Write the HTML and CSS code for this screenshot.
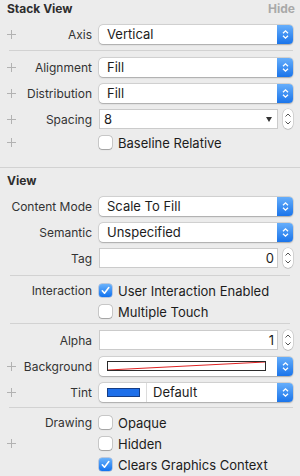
FILE: index.html
```html
<!DOCTYPE html>
<html lang="en">
<head>
<meta charset="UTF-8"/>
<title>Attributes Inspector</title>
<link rel="stylesheet" href="styles.css">
</head>
<body>
<div class="panel">
  <div class="head"><span>Stack View</span><span class="hide">Hide</span></div>

  <div class="row">
    <span class="plus"></span><span class="lbl">Axis</span>
    <div class="popup"><span class="val">Vertical</span><span class="arr"><svg width="7" height="11" viewBox="0 0 7 11"><path d="M1 4.3L3.5 1.8L6 4.3M1 6.7L3.5 9.2L6 6.7" fill="none" stroke="#fff" stroke-width="1.3"/></svg></span></div>
  </div>
  <div class="sep s1"></div>
  <div class="row">
    <span class="plus"></span><span class="lbl">Alignment</span>
    <div class="popup"><span class="val">Fill</span><span class="arr"><svg width="7" height="11" viewBox="0 0 7 11"><path d="M1 4.3L3.5 1.8L6 4.3M1 6.7L3.5 9.2L6 6.7" fill="none" stroke="#fff" stroke-width="1.3"/></svg></span></div>
  </div>
  <div class="row">
    <span class="plus"></span><span class="lbl">Distribution</span>
    <div class="popup"><span class="val">Fill</span><span class="arr"><svg width="7" height="11" viewBox="0 0 7 11"><path d="M1 4.3L3.5 1.8L6 4.3M1 6.7L3.5 9.2L6 6.7" fill="none" stroke="#fff" stroke-width="1.3"/></svg></span></div>
  </div>
  <div class="row">
    <span class="plus"></span><span class="lbl">Spacing</span>
    <div class="fieldwrap">
      <div class="field combo"><span>8</span><span class="tri"></span></div>
      <span class="stepper"><svg width="10" height="20" viewBox="0 0 10 20"><path d="M2.5 7.5L5 5L7.5 7.5M2.5 12.5L5 15L7.5 12.5" fill="none" stroke="#555" stroke-width="1"/></svg></span>
    </div>
  </div>
  <div class="row check">
    <span class="plus"></span>
    <div class="ctl"><span class="cb"></span>Baseline Relative</div>
  </div>

  <div class="sep full"></div>
  <div class="head view"><span>View</span></div>

  <div class="row">
    <span class="lbl">Content Mode</span>
    <div class="popup"><span class="val">Scale To Fill</span><span class="arr"><svg width="7" height="11" viewBox="0 0 7 11"><path d="M1 4.3L3.5 1.8L6 4.3M1 6.7L3.5 9.2L6 6.7" fill="none" stroke="#fff" stroke-width="1.3"/></svg></span></div>
  </div>
  <div class="row">
    <span class="lbl">Semantic</span>
    <div class="popup"><span class="val">Unspecified</span><span class="arr"><svg width="7" height="11" viewBox="0 0 7 11"><path d="M1 4.3L3.5 1.8L6 4.3M1 6.7L3.5 9.2L6 6.7" fill="none" stroke="#fff" stroke-width="1.3"/></svg></span></div>
  </div>
  <div class="row">
    <span class="lbl">Tag</span>
    <div class="fieldwrap">
      <div class="field num">0</div>
      <span class="stepper"><svg width="10" height="20" viewBox="0 0 10 20"><path d="M2.5 7.5L5 5L7.5 7.5M2.5 12.5L5 15L7.5 12.5" fill="none" stroke="#555" stroke-width="1"/></svg></span>
    </div>
  </div>
  <div class="sep s2"></div>
  <div class="row check">
    <span class="lbl">Interaction</span>
    <div class="ctl"><span class="cb on"><svg width="13" height="13" viewBox="0 0 13 13"><path d="M3.3 6.8L5.5 9.2L9.8 3.6" fill="none" stroke="#fff" stroke-width="1.6" stroke-linecap="round" stroke-linejoin="round"/></svg></span>User Interaction Enabled</div>
  </div>
  <div class="row check">
    <div class="ctl"><span class="cb"></span>Multiple Touch</div>
  </div>
  <div class="sep s3"></div>
  <div class="row">
    <span class="lbl">Alpha</span>
    <div class="fieldwrap">
      <div class="field num">1</div>
      <span class="stepper"><svg width="10" height="20" viewBox="0 0 10 20"><path d="M2.5 7.5L5 5L7.5 7.5M2.5 12.5L5 15L7.5 12.5" fill="none" stroke="#555" stroke-width="1"/></svg></span>
    </div>
  </div>
  <div class="row">
    <span class="plus"></span><span class="lbl">Background</span>
    <div class="popup">
      <span class="well"><svg width="100%" height="100%" viewBox="0 0 100 10" preserveAspectRatio="none"><path d="M0 10L100 0" stroke="#d22" stroke-width="1" vector-effect="non-scaling-stroke"/></svg></span>
      <span class="arr"><svg width="7" height="11" viewBox="0 0 7 11"><path d="M1 4.3L3.5 1.8L6 4.3M1 6.7L3.5 9.2L6 6.7" fill="none" stroke="#fff" stroke-width="1.3"/></svg></span>
    </div>
  </div>
  <div class="row">
    <span class="plus"></span><span class="lbl">Tint</span>
    <div class="popup">
      <span class="swatch"></span><span class="div"></span><span class="val tint">Default</span>
      <span class="arr"><svg width="7" height="11" viewBox="0 0 7 11"><path d="M1 4.3L3.5 1.8L6 4.3M1 6.7L3.5 9.2L6 6.7" fill="none" stroke="#fff" stroke-width="1.3"/></svg></span>
    </div>
  </div>
  <div class="sep s4"></div>
  <div class="row check first">
    <span class="lbl">Drawing</span>
    <div class="ctl"><span class="cb"></span>Opaque</div>
  </div>
  <div class="row check">
    <span class="plus"></span>
    <div class="ctl"><span class="cb"></span>Hidden</div>
  </div>
  <div class="row check">
    <div class="ctl"><span class="cb on"><svg width="13" height="13" viewBox="0 0 13 13"><path d="M3.3 6.8L5.5 9.2L9.8 3.6" fill="none" stroke="#fff" stroke-width="1.6" stroke-linecap="round" stroke-linejoin="round"/></svg></span>Clears Graphics Context</div>
  </div>
</div>
</body>
</html>
```
FILE: styles.css
```css
*{box-sizing:border-box}
body{margin:0;background:#ececec;font-family:Inter,'Liberation Sans',sans-serif;color:#2a2a2a}
.panel{width:300px}
.head{display:flex;justify-content:space-between;padding:2px 5px 6px 7px;font-size:12px;font-weight:700;line-height:13px;color:#2e2e2e}
.head.view{padding:6px 7px}
.hide{color:#a9a9a9}

.row{display:grid;grid-template-columns:92px 194px;column-gap:7px;align-items:center;height:26px}
.row.check{height:21px}
.row.first{margin-top:4px}
.lbl{grid-area:1/1;justify-self:end;font-size:12px;white-space:nowrap;color:#333}
.plus{grid-area:1/1;justify-self:start;margin-left:7px;width:9px;height:9px;
  background:linear-gradient(#b2b2b2,#b2b2b2) center/9px 1px no-repeat,linear-gradient(#b2b2b2,#b2b2b2) center/1px 9px no-repeat}
.row > .popup,.row > .fieldwrap,.row > .ctl{grid-column:2;grid-row:1}

.popup{display:flex;align-items:center;height:19px;background:#fff;border-radius:4px;font-size:13px;color:#1c1c1c;
  box-shadow:0 0 0 .5px rgba(0,0,0,.16),0 .5px 1.5px rgba(0,0,0,.22)}
.popup .val{flex:1;padding-left:8px;white-space:nowrap}
.popup .arr{width:16px;align-self:stretch;display:flex;align-items:center;justify-content:center;
  background:linear-gradient(#66aefb,#1a74ea);border-radius:0 4px 4px 0}

.fieldwrap{display:flex;align-items:center;gap:5px}
.field{flex:1;height:20px;background:#fff;border:1px solid #cbcbcb;font-size:13px;color:#1c1c1c;display:flex;align-items:center}
.field.combo{justify-content:space-between;padding:0 5px 0 4px}
.field.num{justify-content:flex-end;padding-right:3px}
.tri{width:0;height:0;border-left:3.5px solid transparent;border-right:3.5px solid transparent;border-top:5px solid #333}
.stepper{width:10px;height:20px;border-radius:5px;background:#fff;display:block;
  box-shadow:0 0 0 .5px rgba(0,0,0,.18),0 .5px 1px rgba(0,0,0,.18)}
.stepper svg{display:block}

.ctl{display:flex;align-items:center;gap:6px;font-size:13px;color:#1c1c1c;white-space:nowrap}
.cb{width:13px;height:13px;border-radius:3px;background:#fff;flex:none;
  box-shadow:0 0 0 .5px rgba(0,0,0,.28),0 .5px 1px rgba(0,0,0,.2)}
.cb.on{background:linear-gradient(#6ab2fb,#1172ef);box-shadow:0 0 0 .5px rgba(0,60,160,.4)}
.cb svg{display:block}

.well{flex:1;height:10px;margin:0 11px 0 8px;border:1px solid #2a2a2a;background:#fff;display:flex}
.well svg{display:block}
.swatch{width:33px;height:9px;margin-left:8px;background:#1d6fea;border:1px solid #163d84;flex:none}
.div{width:1px;align-self:stretch;background:#dcdcdc;margin-left:6px}
.popup .val.tint{padding-left:6px}

.sep{height:1px;background:#d2d2d2}
.sep.s1{margin:3px 7px 3px 9px}
.sep.full{margin:14px 0 0}
.sep.s2{margin:4px 10px 4px}
.sep.s3{margin:1px 10px 3px}
.sep.s4{margin:2px 7px 0 9px}
```
